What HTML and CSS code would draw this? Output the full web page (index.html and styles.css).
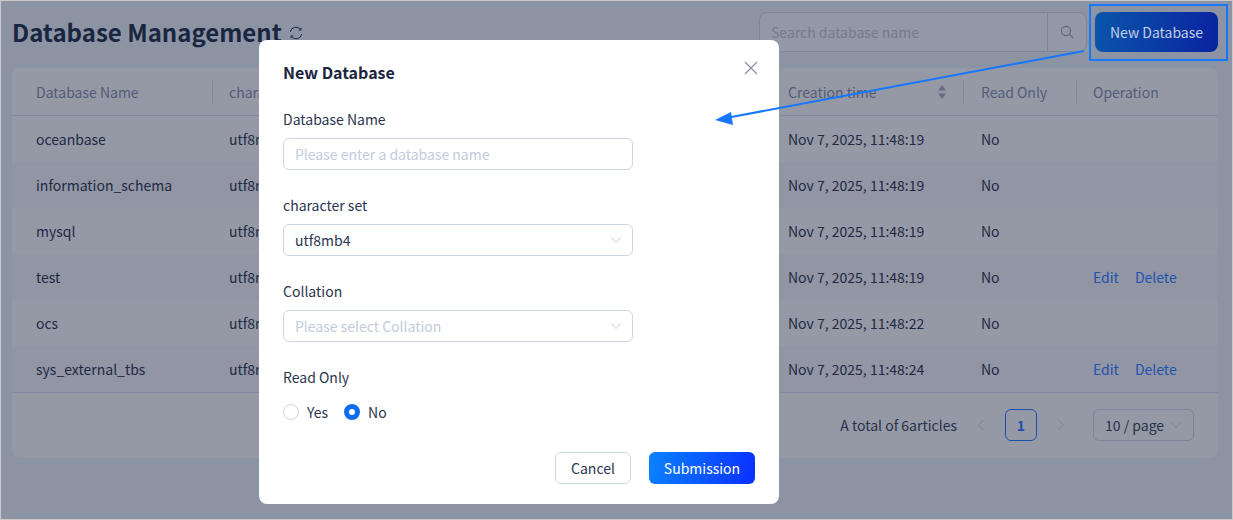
FILE: index.html
```html
<!DOCTYPE html>
<html lang="en">
<head>
<meta charset="utf-8">
<title>Database Management</title>
<link rel="stylesheet" href="styles.css">
</head>
<body>
<div class="page">
  <header class="topbar">
    <div class="heading">
      <h1>Database Management</h1>
      <svg class="refresh" width="14" height="14" viewBox="0 0 14 14" fill="none"><path d="M1.300 5.800A5.800 5.800 0 0 1 11.500 3.300M12.700 8.200A5.800 5.800 0 0 1 2.500 10.700" stroke="#1f2a44" stroke-width="1"/><path d="M12 1.800v2.300H9.700M2 12.200V9.900h2.300" stroke="#1f2a44" stroke-width="1" fill="none"/></svg>
    </div>
    <div class="actions">
      <div class="search">
        <span class="search-input">Search database name</span>
        <span class="search-btn"><svg width="14" height="14" viewBox="0 0 14 14" fill="none"><circle cx="6" cy="6" r="4.600" stroke="#5f6679" stroke-width="1.100"/><path d="M9.400 9.400 13 13" stroke="#5f6679" stroke-width="1.100"/></svg></span>
      </div>
      <button class="new-btn">New Database</button>
    </div>
  </header>
  <section class="card">
    <div class="row head">
      <div class="cell">Database Name</div>
      <div class="cell">character set</div>
      <div class="cell">Collation</div>
      <div class="cell sort">Creation time<svg width="10" height="16" viewBox="0 0 10 16"><path d="M5 1 9 6.500H1zM5 15 1 9.500h8z" fill="#666d82"/></svg></div>
      <div class="cell">Read Only</div>
      <div class="cell">Operation</div>
    </div>
    <div class="row"><div class="cell">oceanbase</div><div class="cell">utf8mb4</div><div class="cell">utf8mb4_general_ci</div><div class="cell">Nov 7, 2025, 11:48:19</div><div class="cell">No</div><div class="cell"></div></div>
    <div class="row alt"><div class="cell">information_schema</div><div class="cell">utf8mb4</div><div class="cell">utf8mb4_general_ci</div><div class="cell">Nov 7, 2025, 11:48:19</div><div class="cell">No</div><div class="cell"></div></div>
    <div class="row"><div class="cell">mysql</div><div class="cell">utf8mb4</div><div class="cell">utf8mb4_general_ci</div><div class="cell">Nov 7, 2025, 11:48:19</div><div class="cell">No</div><div class="cell"></div></div>
    <div class="row alt"><div class="cell">test</div><div class="cell">utf8mb4</div><div class="cell">utf8mb4_general_ci</div><div class="cell">Nov 7, 2025, 11:48:19</div><div class="cell">No</div><div class="cell ops"><a>Edit</a><a>Delete</a></div></div>
    <div class="row"><div class="cell">ocs</div><div class="cell">utf8mb4</div><div class="cell">utf8mb4_general_ci</div><div class="cell">Nov 7, 2025, 11:48:22</div><div class="cell">No</div><div class="cell"></div></div>
    <div class="row alt"><div class="cell">sys_external_tbs</div><div class="cell">utf8mb4</div><div class="cell">utf8mb4_general_ci</div><div class="cell">Nov 7, 2025, 11:48:24</div><div class="cell">No</div><div class="cell ops"><a>Edit</a><a>Delete</a></div></div>
    <footer class="pager">
      <span class="total">A total of 6articles</span>
      <svg class="arrow-ico" width="10" height="12" viewBox="0 0 10 12" fill="none"><path d="M7.500 1 2.500 6l5 5" stroke="#7d8497" stroke-width="1"/></svg>
      <span class="page-no">1</span>
      <svg class="arrow-ico" width="10" height="12" viewBox="0 0 10 12" fill="none"><path d="M2.500 1l5 5-5 5" stroke="#7d8497" stroke-width="1"/></svg>
      <span class="page-size">10 / page<svg width="12" height="8" viewBox="0 0 12 8" fill="none"><path d="M1 1l5 5.500L11 1" stroke="#7d8497" stroke-width="1"/></svg></span>
    </footer>
  </section>
</div>

<div class="modal">
  <h2>New Database</h2>
  <svg class="close" width="14" height="14" viewBox="0 0 14 14" fill="none"><path d="M1 1l12 12M13 1 1 13" stroke="#8a91a3" stroke-width="1.300"/></svg>
  <div class="field">
    <label>Database Name</label>
    <div class="control placeholder">Please enter a database name</div>
  </div>
  <div class="field">
    <label>character set</label>
    <div class="control">utf8mb4<svg width="12" height="8" viewBox="0 0 12 8" fill="none"><path d="M1.500 1.500 6 6.500l4.500-5" stroke="#c3cbdc" stroke-width="1"/></svg></div>
  </div>
  <div class="field">
    <label>Collation</label>
    <div class="control placeholder">Please select Collation<svg width="12" height="8" viewBox="0 0 12 8" fill="none"><path d="M1.500 1.500 6 6.500l4.500-5" stroke="#c3cbdc" stroke-width="1"/></svg></div>
  </div>
  <div class="field radio-field">
    <label>Read Only</label>
    <div class="radios">
      <span class="radio"><i class="dot"></i>Yes</span>
      <span class="radio"><i class="dot on"></i>No</span>
    </div>
  </div>
  <div class="modal-foot">
    <button class="cancel">Cancel</button>
    <button class="submit">Submission</button>
  </div>
</div>

<div class="callout"></div>
<svg class="pointer" width="1233" height="520" viewBox="0 0 1233 520" fill="none">
  <path d="M1084 51 726 118" stroke="#1677ff" stroke-width="2"/>
  <path d="M715 120 731 112 733 125z" fill="#1677ff"/>
</svg>
</body>
</html>
```
FILE: styles.css
```css
* { box-sizing: border-box; }
html, body { margin: 0; height: 100%; }
body {
  position: relative;
  width: 1233px;
  height: 520px;
  overflow: hidden;
  font-family: "Noto Sans CJK SC", "Noto Sans", sans-serif;
  font-size: 14px;
  color: #1f2a44;
  background: #8c93a3;
}
.page {
  height: 520px;
  padding: 0 14px 0 11px;
  border: 1px solid #c9c9c9;
  background: #8c93a3;
}
.topbar {
  display: flex;
  justify-content: space-between;
  height: 67px;
  padding-top: 11px;
}
.heading { display: flex; align-items: center; height: 40px; gap: 7px; }
h1 { margin: 0; font-size: 24px; font-weight: 700; line-height: 40px; color: #1a2540; }
.refresh { margin-top: 2px; }
.actions { display: flex; gap: 8px; }
.search {
  display: flex;
  width: 328px;
  height: 40px;
  border: 1px solid #7d8497;
  border-radius: 8px;
  background: #9398a6;
}
.search-input { flex: 1; padding: 0 11px; line-height: 38px; color: #747b8e; }
.search-btn {
  display: flex;
  align-items: center;
  justify-content: center;
  width: 39px;
  border-left: 1px solid #7d8497;
}
.new-btn {
  width: 123px;
  height: 40px;
  border: 0;
  border-radius: 8px;
  padding: 0;
  font: inherit;
  color: #c4cfe3;
  background: linear-gradient(100deg, #0a56ab, #0a22a0);
}
.card {
  width: 1206px;
  height: 390px;
  border-radius: 8px;
  background: #9599a6;
  overflow: hidden;
}
.row {
  display: grid;
  grid-template-columns: 201px 279px 280px 193px 112px 141px;
  align-items: center;
  height: 46px;
}
.row.alt { background: #9195a4; }
.head {
  height: 48px;
  color: #535c78;
  border-bottom: 1px solid #838a9e;
}
.cell { padding-left: 16px; white-space: nowrap; overflow: hidden; }
.cell:first-child { padding-left: 24px; }
.head .cell { position: relative; line-height: 32px; overflow: visible; }
.head .cell:not(:first-child)::before {
  content: "";
  position: absolute;
  left: -1px;
  top: 5px;
  width: 1px;
  height: 22px;
  background: #838a9e;
}
.head .sort + .cell::before { left: -2px; }
.sort { display: flex; align-items: center; justify-content: space-between; padding-right: 18px; }
.ops { display: flex; gap: 16px; color: #2153b0; }
.pager {
  display: flex;
  align-items: center;
  justify-content: flex-end;
  height: 66px;
  padding: 0 24px 1px 0;
  border-top: 1px solid #828aa0;
}
.total { margin-right: 19px; color: #28324c; }
.page-no {
  width: 32px;
  height: 32px;
  margin: 0 19px;
  border: 1px solid #1c50ae;
  border-radius: 6px;
  text-align: center;
  line-height: 30px;
  font-weight: 700;
  color: #1c50ae;
}
.page-size {
  display: flex;
  align-items: center;
  justify-content: space-between;
  width: 101px;
  height: 32px;
  margin-left: 27px;
  padding: 0 11px;
  border: 1px solid #7d8497;
  border-radius: 6px;
  color: #28324c;
}
.modal {
  position: absolute;
  left: 259px;
  top: 40px;
  display: flex;
  flex-direction: column;
  width: 520px;
  height: 464px;
  padding: 20px 24px 20px;
  border-radius: 8px;
  background: #fff;
}
h2 { margin: 0; font-size: 16px; font-weight: 700; line-height: 24px; color: #1a2540; }
.close { position: absolute; right: 21px; top: 21px; }
.field { margin-top: 24px; width: 350px; }
label { display: block; height: 22px; line-height: 22px; margin-bottom: 8px; color: #2b3550; }
.control {
  display: flex;
  align-items: center;
  justify-content: space-between;
  height: 32px;
  padding: 0 10px 0 11px;
  border: 1px solid #cdd5e4;
  border-radius: 6px;
  color: #2b3550;
}
.placeholder { color: #c3cbdc; }
.radio-field label { margin-bottom: 13px; }
.radios { display: flex; gap: 16px; }
.radio { display: flex; align-items: center; gap: 8px; line-height: 22px; color: #2b3550; }
.dot {
  width: 16px;
  height: 16px;
  border: 1px solid #cdd5e4;
  border-radius: 50%;
}
.dot.on { border: 5px solid #0d6cf2; background: #fff; }
.modal-foot { display: flex; justify-content: flex-end; gap: 18px; margin-top: auto; }
.modal-foot button { height: 32px; padding: 0; font: inherit; border-radius: 6px; }
.cancel { width: 76px; border: 1px solid #cdd5e4; background: #fff; color: #2b3550; }
.submit { width: 106px; border: 0; color: #fff; background: linear-gradient(100deg, #0a83ff, #0a2fff); }
.callout {
  position: absolute;
  left: 1089px;
  top: 4px;
  width: 139px;
  height: 57px;
  border: 2px solid #1677ff;
}
.pointer { position: absolute; left: 0; top: 0; pointer-events: none; }
```
